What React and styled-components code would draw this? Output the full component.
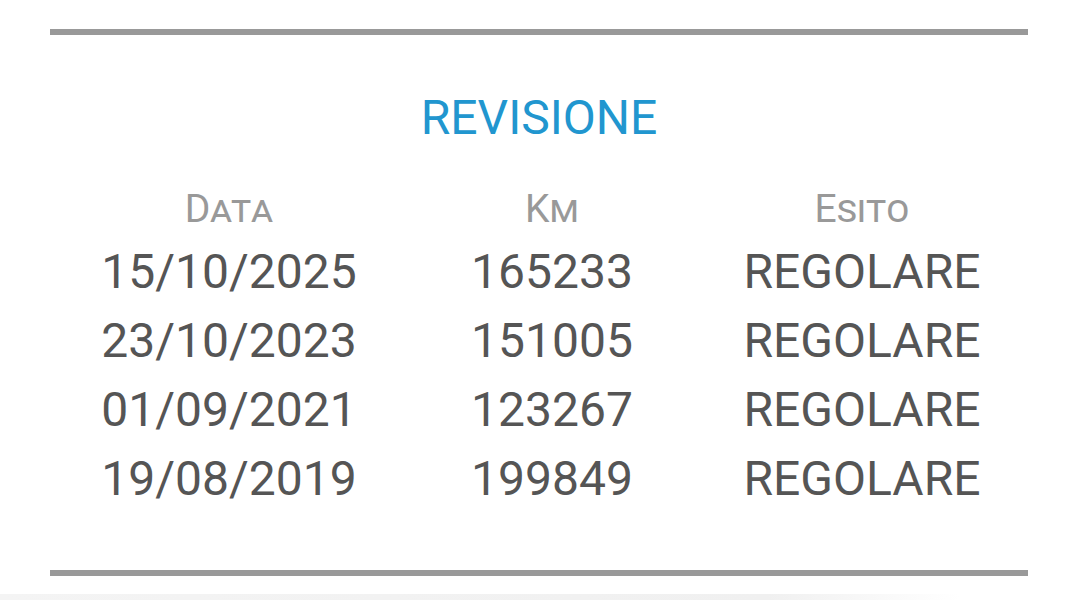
import React from "react";
import styled, { createGlobalStyle } from "styled-components";

const Global = createGlobalStyle`
  html, body { margin: 0; padding: 0; background: #fff; }
  body { font-family: Roboto, "Noto Sans", sans-serif; }
`;

const Page = styled.div`
  width: 1079px;
  height: 600px;
  overflow: hidden;
  display: flex;
  flex-direction: column;
  position: relative;
`;

const Card = styled.section`
  margin: 29px 51px 0 50px;
  border-top: 6px solid #999;
  border-bottom: 6px solid #999;
  display: flex;
  flex-direction: column;
  align-items: stretch;
  height: 547px;
  box-sizing: border-box;
`;

const Title = styled.h2`
  margin: 54px 0 0;
  text-align: center;
  font-weight: 400;
  font-size: 48px;
  line-height: 57px;
  color: #2196cf;
`;

const Table = styled.div`
  margin-top: 35px;
  display: grid;
  grid-template-columns: 358px 288px 1fr;
`;

const Head = styled.div`
  text-align: center;
  font-size: 39px;
  line-height: 56px;
  font-variant: small-caps;
  color: #999;
`;

const Cell = styled.div`
  text-align: center;
  font-size: 48px;
  line-height: 69px;
  color: #555;
`;

const NextStrip = styled.div`
  position: absolute;
  left: 0;
  bottom: 0;
  width: 960px;
  height: 6px;
  background: linear-gradient(to right, #f4f4f4, #f0f0f0 80%, rgba(255,255,255,0));
`;

const rows = [
  ["15/10/2025", "165233", "REGOLARE"],
  ["23/10/2023", "151005", "REGOLARE"],
  ["01/09/2021", "123267", "REGOLARE"],
  ["19/08/2019", "199849", "REGOLARE"],
];

export default function App() {
  return (
    <Page>
      <Global />
      <Card>
        <Title>REVISIONE</Title>
        <Table>
          <Head>Data</Head>
          <Head>Km</Head>
          <Head>Esito</Head>
          {rows.map((r, i) => (
            <React.Fragment key={i}>
              <Cell>{r[0]}</Cell>
              <Cell>{r[1]}</Cell>
              <Cell>{r[2]}</Cell>
            </React.Fragment>
          ))}
        </Table>
      </Card>
      <NextStrip />
    </Page>
  );
}
